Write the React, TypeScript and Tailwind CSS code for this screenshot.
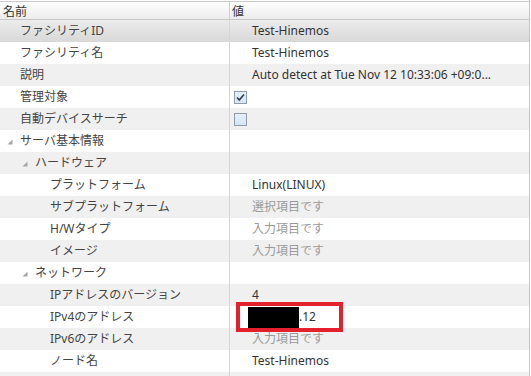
import React from "react"

type Row = {
  label: string
  value?: string
  depth: number
  group?: boolean
  placeholder?: boolean
  check?: "on" | "off"
  masked?: boolean
}

const rows: Row[] = [
  { label: "ファシリティID", value: "Test-Hinemos", depth: 0 },
  { label: "ファシリティ名", value: "Test-Hinemos", depth: 0 },
  { label: "説明", value: "Auto detect at Tue Nov 12 10:33:06 +09:0...", depth: 0 },
  { label: "管理対象", check: "on", depth: 0 },
  { label: "自動デバイスサーチ", check: "off", depth: 0 },
  { label: "サーバ基本情報", depth: 0, group: true },
  { label: "ハードウェア", depth: 1, group: true },
  { label: "プラットフォーム", value: "Linux(LINUX)", depth: 2 },
  { label: "サブプラットフォーム", value: "選択項目です", depth: 2, placeholder: true },
  { label: "H/Wタイプ", value: "入力項目です", depth: 2, placeholder: true },
  { label: "イメージ", value: "入力項目です", depth: 2, placeholder: true },
  { label: "ネットワーク", depth: 1, group: true },
  { label: "IPアドレスのバージョン", value: "4", depth: 2 },
  { label: "IPv4のアドレス", value: ".12", depth: 2, masked: true },
  { label: "IPv6のアドレス", value: "入力項目です", depth: 2, placeholder: true },
  { label: "ノード名", value: "Test-Hinemos", depth: 2 },
  { label: "", depth: 2 },
]

// small expanded-node arrow, like the old SWT tree
function Expander() {
  return (
    <svg width="6" height="6" viewBox="0 0 6 6" className="shrink-0">
      <path d="M5.5 0.5 L5.5 5.5 L0.5 5.5 Z" fill="#a6a6a6" />
    </svg>
  )
}

function CheckBox({ checked }: { checked: boolean }) {
  return (
    <div className="w-[13px] h-[13px] border border-[#8f9bab] bg-gradient-to-b from-[#e4f0fb] to-[#d4e6f7] flex items-center justify-center">
      {checked && (
        <svg width="11" height="11" viewBox="0 0 11 11">
          <path d="M2 5.5 L4.3 8 L9 2.5" fill="none" stroke="#2b3a4e" strokeWidth="1.6" />
        </svg>
      )}
    </div>
  )
}

export default function App() {
  return (
    <div
      className="w-[531px] h-[376px] overflow-hidden bg-white text-[12px] text-[#333]"
      style={{ fontFamily: '"Noto Sans", "Noto Sans CJK JP", sans-serif' }}
    >
      <div className="w-[530px] border-r border-[#c6c6c6] pt-[1px]">
        {/* header */}
        <div className="flex h-[19px] border-t border-b border-[#c8c8c8] bg-gradient-to-b from-white to-[#ececec] leading-[19px]">
          <div className="w-[230px] border-r border-[#d0d0d0] pl-[3px]">名前</div>
          <div className="flex-1 pl-[2px]">値</div>
        </div>

        {rows.map((row, i) => {
          const selected = i === 0
          const bg = selected
            ? "bg-gradient-to-b from-[#ececec] to-[#d8d8d8]"
            : i % 2 === 0
            ? "bg-[#f0f0f0]"
            : "bg-white"
          const textLeft = 20 + row.depth * 15
          return (
            <div key={i} className={`flex h-[22px] items-center ${bg}`}>
              <div className="w-[230px] h-full border-r border-[#d6d6d6] flex items-center relative text-[#444]">
                {row.group && (
                  <div className="absolute top-[9px]" style={{ left: textLeft - 13 }}>
                    <Expander />
                  </div>
                )}
                <span className="whitespace-nowrap" style={{ paddingLeft: textLeft }}>
                  {row.label}
                </span>
              </div>
              <div className="flex-1 h-full flex items-center whitespace-nowrap overflow-hidden">
                {row.check ? (
                  <div className="pl-[4px]">
                    <CheckBox checked={row.check === "on"} />
                  </div>
                ) : row.masked ? (
                  <div className="pl-[18px] flex items-center">
                    <div className="w-[51px] h-[21px] bg-black" />
                    <span>{row.value}</span>
                  </div>
                ) : (
                  <span className={`pl-[22px] ${row.placeholder ? "text-[#9a9a9a]" : ""}`}>{row.value}</span>
                )}
              </div>
            </div>
          )
        })}
      </div>

      {/* red annotation box around the IPv4 value */}
      <div className="absolute left-[236px] top-[302px] w-[107px] h-[30px] border-[4px] border-[#e3202b]" />
    </div>
  )
}
